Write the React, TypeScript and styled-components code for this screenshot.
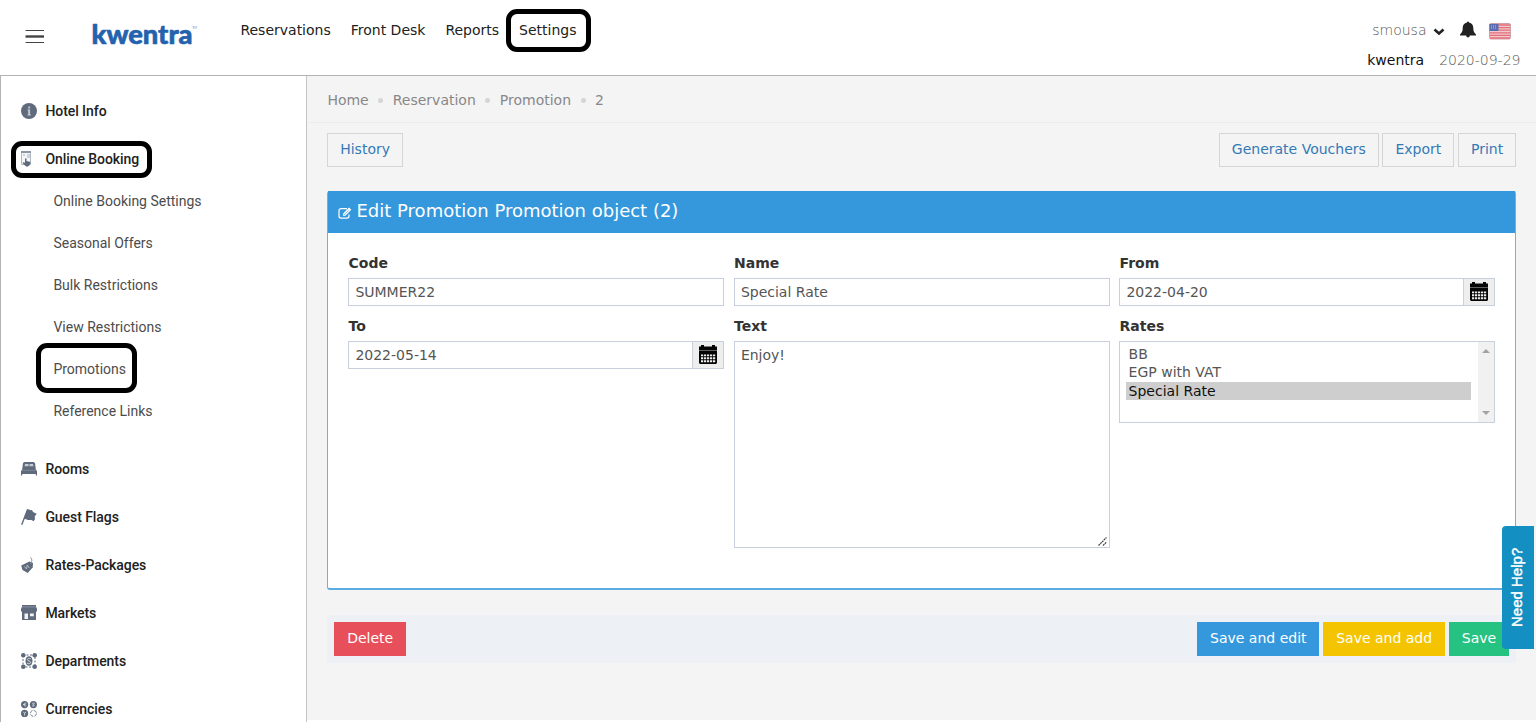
import React from 'react';
import styled, { createGlobalStyle } from 'styled-components';

const GlobalStyle = createGlobalStyle`
  *, *::before, *::after { box-sizing: border-box; }
  body { margin: 0; background: #fff; overflow: hidden; }
`;

const Page = styled.div`
  position: relative;
  display: flex;
  flex-direction: column;
  width: 1536px;
  height: 722px;
  overflow: hidden;
  background: #fff;
  font-family: 'DejaVu Sans', sans-serif;
  font-size: 14px;
  color: #333;
`;

/* ---------- top bar ---------- */
const Header = styled.header`
  display: flex;
  flex: none;
  height: 76px;
  border-bottom: 1px solid #b4b4b4;
`;
const MenuButton = styled.div`
  width: 91px;
  padding: 29px 0 0 25px;
  svg { display: block; }
`;
const Brand = styled.div`
  width: 149.4px;
  padding-top: 17px;
  svg { display: block; }
`;
const Nav = styled.nav`
  display: flex;
  gap: 20px;
  flex: 1;
  height: 60px;
  align-items: center;
`;
const NavLink = styled.a`
  color: #212121;
  font-size: 14px;
  line-height: 20px;
  white-space: nowrap;
`;
const Account = styled.div`
  width: 170px;
  padding: 20px 15.5px 0 0;
  display: flex;
  flex-direction: column;
  align-items: flex-end;
`;
const AccountRow = styled.div`
  display: flex;
  align-items: center;
  height: 20px;
  margin-right: 10px;
  svg { display: block; }
`;
const Thin = styled.span`
  font-weight: 200;
  color: #555;
`;
const Chevron = styled.span` margin: 3px 14.5px 0 6.5px; `;
const Bell = styled.span` margin: -2px 13px 0 0; `;
const Flag = styled.span` margin-top: 3px; `;
const PropertyRow = styled.div`
  display: flex;
  gap: 15px;
  margin-top: 10px;
  line-height: 20px;
  color: #111;
`;

/* ---------- sidebar ---------- */
const Body = styled.div`
  display: flex;
  flex: 1;
  min-height: 0;
`;
const Sidebar = styled.aside`
  width: 307px;
  flex: none;
  overflow: hidden;
  padding-top: 11px;
  border-left: 1px solid #b4b4b4;
  border-right: 1px solid #c4c4c4;
  font-family: Roboto, sans-serif;
  background: #fff;
`;
const MenuItem = styled.div`
  display: flex;
  align-items: center;
  height: 48px;
  padding-left: 20px;
  color: #212121;
  font-size: 14px;
  font-weight: 500;
  letter-spacing: -0.06px;
`;
const MenuIcon = styled.span`
  width: 24.4px;
  height: 16px;
  svg { display: block; }
`;
const SubMenu = styled.div`
  display: flex;
  flex-direction: column;
  margin: -3px 0 13px;
`;
const SubItem = styled.div`
  height: 42px;
  line-height: 42px;
  padding-left: 52.4px;
  font-size: 14px;
  color: #4c4c4c;
`;

/* ---------- main ---------- */
const Main = styled.main`
  flex: 1;
  min-width: 0;
  height: 644px;
  background: #f4f4f4;
`;
const Crumbs = styled.div`
  display: flex;
  align-items: center;
  height: 47px;
  padding: 2px 0 0 20.4px;
  border-bottom: 1px solid #ececec;
  color: #888;
`;
const CrumbDot = styled.i`
  width: 5px;
  height: 5px;
  margin: 0 9.5px;
  border-radius: 50%;
  background: #d5d5d5;
`;
const Toolbar = styled.div`
  display: flex;
  justify-content: space-between;
  padding: 10px 20px 0;
`;
const ButtonGroup = styled.div`
  display: flex;
  gap: 3.7px;
`;
const Button = styled.div<{ $bg?: string }>`
  height: 34px;
  padding: 0 11.8px 0 12.2px;
  border: 1px solid ${p => p.$bg ?? '#d5d5d5'};
  background: ${p => p.$bg ?? 'transparent'};
  color: ${p => (p.$bg ? '#fff' : '#337ab7')};
  line-height: 30px;
  white-space: nowrap;
`;
const Panel = styled.section`
  margin: 24px 20px 0;
  height: 399px;
  border: 1px solid #6cb0e4;
  border-bottom: 2px solid #5dabe3;
  border-radius: 3px;
  background: #fff;
`;
const PanelTitle = styled.div`
  display: flex;
  align-items: center;
  height: 42px;
  margin: -1px 0 0;
  padding: 0 0 3px 10px;
  background: #3598dc;
  color: #fff;
  font-size: 18px;
  gap: 4.5px;
  svg { display: block; margin-top: 5px; }
`;
const Form = styled.div`
  display: grid;
  grid-template-columns: repeat(3, 1fr);
  column-gap: 9.5px;
  row-gap: 10px;
  align-items: start;
  padding: 20px;
`;
const Field = styled.div`
  display: flex;
  flex-direction: column;
`;
const Label = styled.label`
  font-weight: 700;
  line-height: 20px;
  margin-bottom: 5px;
  padding-left: 0.5px;
`;
const Control = styled.div<{ $h?: number }>`
  position: relative;
  display: flex;
  height: ${p => p.$h ?? 28}px;
  border: 1px solid #c8cfdd;
  background: #fff;
  color: #555;
`;
const Value = styled.div`
  flex: 1;
  padding-left: 6.4px;
  line-height: 27px;
`;
const Addon = styled.div`
  width: 31px;
  padding-bottom: 1px;
  border-left: 1px solid #ccd0d8;
  background: #eee;
  display: flex;
  align-items: center;
  justify-content: center;
`;
const Grip = styled.span`
  position: absolute;
  right: 2px;
  bottom: 1px;
  svg { display: block; }
`;
const Options = styled.div`
  flex: 1;
  padding: 3px 7px 0 6px;
`;
const Option = styled.div<{ $on?: boolean }>`
  height: 18.4px;
  line-height: 19px;
  padding-left: 2.6px;
  background: ${p => (p.$on ? '#cecece' : 'transparent')};
  color: ${p => (p.$on ? '#101010' : '#555')};
`;
const Scroll = styled.div`
  width: 16px;
  background: #f1f1f1;
  display: flex;
  flex-direction: column;
  align-items: center;
  justify-content: space-between;
  padding: 7px 0 7px;
`;
const Actions = styled.div`
  display: flex;
  justify-content: space-between;
  height: 48px;
  margin: 25px 20px 0;
  padding: 7px;
  background: #edf1f6;
`;

/* ---------- overlays ---------- */
const Highlight = styled.div<{ $x: number; $y: number; $w: number; $h: number }>`
  position: absolute;
  left: ${p => p.$x}px;
  top: ${p => p.$y}px;
  width: ${p => p.$w}px;
  height: ${p => p.$h}px;
  border: 5px solid #000;
  border-radius: 11px;
`;
const HelpTab = styled.div`
  position: absolute;
  left: 1502px;
  top: 526px;
  width: 32px;
  height: 123px;
  padding-left: 4px;
  display: flex;
  align-items: center;
  justify-content: center;
  background: #138fc2;
  color: #fff;
  font: 400 15px 'Liberation Sans', Arial, sans-serif;
  -webkit-text-stroke: 0.45px #fff;
  writing-mode: vertical-rl;
  transform: rotate(180deg);
  border-radius: 0 4px 4px 0;
`;

const slate = '#5f6b7c';
const icons: Record<string, React.ReactNode> = {
  info: (
    <>
      <circle cx="8" cy="8" r="8" fill={slate} />
      <path d="M7.2 3.5h1.9v2H7.2zM6.4 6.6h2.7v5h.8v1H6.3v-1h.9v-4h-.8z" fill="#c4cad2" />
    </>
  ),
  booking: (
    <>
      <path d="M.5.5h9v13h-9z" fill="#f4f5f7" stroke="#b3bac3" />
      <path d="M0 0h10v2H0z" fill="#8d97a4" />
      <path d="M2 4h2M6 4h3M6 6h3" stroke="#aab1bb" />
      <path d="M4 8c0-1 1.500-1 1.500 0v2l3.200.8c.8.2 1 .7.8 1.500L8.300 14.500C7 16 5 16 4 14.500L1.500 12c.2-1.200 1.500-1 2.500-.3z" fill={slate} />
    </>
  ),
  bed: (
    <>
      <path d="M3.500 1h9l1.500 1 .8 6.500L16 10v4.500h-1.200V13H1.200v1.500H0V10l1.200-1.500L2 2z" fill={slate} />
      <path d="M4 3h3.500v2.300H3.600zM8.500 3H12l.4 2.300H8.500z" fill="#c6ccd4" />
      <path d="M1 9.400h14" stroke="#8b95a2" strokeWidth=".6" />
    </>
  ),
  flag: (
    <>
      <path d="M6.600.4.700 15.800" stroke={slate} strokeWidth="1.400" />
      <path d="M6.500 0 10 1.300l1-.2 1 2 3.700 1.700-2 2.700.3 2.700-1.500 2-2-1.200L7 11 3 9.500z" fill={slate} />
    </>
  ),
  tag: (
    <>
      <path d="M.200 8.500 8.500 4.500 12 6l-.3 4.500-5 5.500L1.500 13z" fill={slate} />
      <path d="M9.300 7C11 5 11.500 2.500 9.500.400" stroke="#87919e" fill="none" />
      <path d="m3.500 9.500 2 2.500.8-4 2 3" stroke="#b9c0c9" fill="none" strokeWidth=".9" />
    </>
  ),
  store: (
    <>
      <path d="M1 0h14v1.500L16 4v2.500h-1V15H1V6.500H0V4l1-2.500z" fill={slate} />
      <path d="M1 1.900h14" stroke="#9fa8b4" strokeWidth=".6" />
      <path d="M3.500 8.500H7V14H3.500zM9 8.500h3.800v2.800H9z" fill="#f0f2f4" />
    </>
  ),
  dept: (
    <>
      <path d="M2 2h12v12H2z" fill="none" stroke={slate} strokeDasharray="2 1.500" />
      <circle cx="2.300" cy="2.300" r="2.300" fill={slate} />
      <circle cx="13.700" cy="2.300" r="2.300" fill={slate} />
      <circle cx="2.300" cy="13.700" r="2.300" fill={slate} />
      <circle cx="13.700" cy="13.700" r="2.300" fill={slate} />
      <ellipse cx="8" cy="8" rx="3.500" ry="4.800" fill={slate} />
      <path d="M9.800 6C8.500 4.800 6.300 5.300 6.500 6.800S9.700 8 9.600 9.500s-2.300 1.700-3.500.5" stroke="#e4e7eb" fill="none" strokeWidth=".9" />
    </>
  ),
  coins: (
    <>
      <circle cx="3.600" cy="3.600" r="3.600" fill={slate} />
      <circle cx="12.400" cy="3.600" r="3.600" fill={slate} />
      <circle cx="3.600" cy="12.400" r="3.600" fill={slate} />
      <circle cx="12.400" cy="12.400" r="3" fill="none" stroke="#7d8896" strokeDasharray="3.500 1.200" />
      <path d="M5.200 2.300c-3-1-3 3.500 0 2.500M2 3.500h2.500M13.800 2.300c-3-1-2.500 1.300-1.300 1.300 1.500.4 1 2-1.400 1.200M2.300 10.800l1.300 1.600 1.300-1.600M3.600 12.300v2.200" stroke="#e4e7eb" fill="none" strokeWidth=".8" />
    </>
  ),
};
const Glyph = ({ name }: { name: string }) => (
  <MenuIcon><svg width="16" height="16" viewBox="0 0 16 16">{icons[name]}</svg></MenuIcon>
);

const CalendarIcon = () => (
  <svg width="18" height="19" viewBox="0 0 18 19">
    <path d="M2 0h3v1.500h8V0h3v1.500h2V18l-1 1H1l-1-1V1.500h2z" fill="#050505" />
    <path d="M0 5.500h18" stroke="#8a8a8a" strokeWidth=".7" />
    <path d="M2 9.500h2.200v1.700H2zM5 9.500h2.200v1.700H5zM8 9.500h2.200v1.700H8zM11 9.500h2.200v1.700H11zM14 9.500h2.200v1.700H14zM2 12.200h2.200v2H2zM5 12.200h2.200v2H5zM8 12.200h2.200v2H8zM11 12.200h2.200v2H11zM14 12.200h2.200v2H14zM2 15.200h2.200v2H2zM5 15.200h2.200v2H5zM8 15.200h2.200v2H8zM11 15.200h2.200v2H11zM14 15.200h2.200v2H14z" fill="#eee" />
  </svg>
);

const FlagIcon = () => (
  <svg width="22" height="17" viewBox="0 0 22 17">
    <rect x=".5" y=".5" width="21" height="15.500" rx="1.500" fill="#f3c9cd" stroke="#cfa1a6" />
    <path d="M1 2h20M1 4.600h20M1 7.200h20M1 9.800h20M1 12.400h20M1 15h20" stroke="#e26e78" strokeWidth="1.300" />
    <path d="M.5 1h9v7h-9z" fill="#5b6db0" />
    <path d="M2 3h6M2 5h6" stroke="#b7c0df" strokeDasharray="1 1" />
  </svg>
);

const DateField = ({ label, value }: { label: string; value: string }) => (
  <Field>
    <Label>{label}</Label>
    <Control><Value>{value}</Value><Addon><CalendarIcon /></Addon></Control>
  </Field>
);

const topItems = [['info', 'Hotel Info'], ['booking', 'Online Booking']];
const subItems = ['Online Booking Settings', 'Seasonal Offers', 'Bulk Restrictions', 'View Restrictions', 'Promotions', 'Reference Links'];
const moreItems = [['bed', 'Rooms'], ['flag', 'Guest Flags'], ['tag', 'Rates-Packages'], ['store', 'Markets'], ['dept', 'Departments'], ['coins', 'Currencies']];
const crumbs = ['Home', 'Reservation', 'Promotion', '2'];

export default function App() {
  return (
    <Page>
      <GlobalStyle />
      <Header>
        <MenuButton>
          <svg width="20" height="15" viewBox="0 0 20 15">
            <path d="M.5 1.500h18.500M.5 13.500h18.500" stroke="#444" strokeWidth="1.200" />
            <path d="M.5 7.500h18.500" stroke="#444" strokeWidth="2.400" />
          </svg>
        </MenuButton>
        <Brand>
          <svg width="112" height="34" viewBox="0 0 112 34">
            <text x="0.500" y="26.800" textLength="101" lengthAdjust="spacingAndGlyphs" fontFamily="Lato, sans-serif" fontWeight="900" fontSize="26.500" fill="#2462ae" stroke="#2462ae" strokeWidth=".6" strokeLinejoin="round">kwentra</text>
            <text x="101" y="12" textLength="5" fontFamily="Lato, sans-serif" fontSize="4" fill="#7c9fce">TM</text>
          </svg>
        </Brand>
        <Nav>
          {['Reservations', 'Front Desk', 'Reports', 'Settings'].map(t => <NavLink key={t}>{t}</NavLink>)}
        </Nav>
        <Account>
          <AccountRow>
            <Thin>smousa</Thin>
            <Chevron>
              <svg width="12" height="8" viewBox="0 0 12 8"><path d="m1.500 1.500 4.500 4 4.500-4" fill="none" stroke="#222" strokeWidth="2.500" /></svg>
            </Chevron>
            <Bell>
              <svg width="16" height="17" viewBox="0 0 16 17">
                <path d="M7 1.500a1 1 0 0 1 2 0c3 .6 4.300 2.700 4.300 5.500 0 3 .7 4.500 2.700 6.500v1H0v-1C2 11.500 2.700 10 2.700 7 2.700 4.200 4 2.100 7 1.500zM6 14h4c-.2 3.300-3.800 3.300-4 0z" fill="#222" />
              </svg>
            </Bell>
            <Flag><FlagIcon /></Flag>
          </AccountRow>
          <PropertyRow><span>kwentra</span><Thin>2020-09-29</Thin></PropertyRow>
        </Account>
      </Header>
      <Body>
        <Sidebar>
          {topItems.map(([i, t]) => <MenuItem key={t}><Glyph name={i} />{t}</MenuItem>)}
          <SubMenu>{subItems.map(t => <SubItem key={t}>{t}</SubItem>)}</SubMenu>
          {moreItems.map(([i, t]) => <MenuItem key={t}><Glyph name={i} />{t}</MenuItem>)}
        </Sidebar>
        <Main>
          <Crumbs>
            {crumbs.map((t, i) => (
              <React.Fragment key={t}>{i > 0 && <CrumbDot />}<span>{t}</span></React.Fragment>
            ))}
          </Crumbs>
          <Toolbar>
            <Button>History</Button>
            <ButtonGroup>
              <Button>Generate Vouchers</Button><Button>Export</Button><Button>Print</Button>
            </ButtonGroup>
          </Toolbar>
          <Panel>
            <PanelTitle>
              <svg width="14" height="12" viewBox="0 0 14 12">
                <path d="M9 1.600H3A2 2 0 0 0 1 3.600v5.500a2 2 0 0 0 2 2h6a2 2 0 0 0 2-2V7.500" fill="none" stroke="#fff" strokeWidth="1.200" />
                <path d="m5 8.800.2-2.400L11 .6l2.300 2.200-5.900 5.900z" fill="#fff" />
                <path d="m6.200 7.700 4.400-4.400" stroke="#3598dc" strokeWidth=".7" />
              </svg>
              Edit Promotion Promotion object (2)
            </PanelTitle>
            <Form>
              <Field><Label>Code</Label><Control><Value>SUMMER22</Value></Control></Field>
              <Field><Label>Name</Label><Control><Value>Special Rate</Value></Control></Field>
              <DateField label="From" value="2022-04-20" />
              <DateField label="To" value="2022-05-14" />
              <Field>
                <Label>Text</Label>
                <Control $h={207}>
                  <Value>Enjoy!</Value>
                  <Grip><svg width="9" height="9" viewBox="0 0 9 9"><path d="M.5 8.500l8-8M5 8.500 8.500 5" stroke="#444" strokeWidth="1.200" strokeDasharray="2 .5" /></svg></Grip>
                </Control>
              </Field>
              <Field>
                <Label>Rates</Label>
                <Control $h={82}>
                  <Options><Option>BB</Option><Option>EGP with VAT</Option><Option $on>Special Rate</Option></Options>
                  <Scroll>
                    <svg width="8" height="4" viewBox="0 0 8 4"><path d="m0 4 4-4 4 4z" fill="#a3a3a3" /></svg>
                    <svg width="8" height="4" viewBox="0 0 8 4"><path d="m0 0 4 4 4-4z" fill="#a3a3a3" /></svg>
                  </Scroll>
                </Control>
              </Field>
            </Form>
          </Panel>
          <Actions>
            <Button $bg="#e7505a">Delete</Button>
            <ButtonGroup>
              <Button $bg="#3598dc">Save and edit</Button>
              <Button $bg="#f4c400">Save and add</Button>
              <Button $bg="#26c281">Save</Button>
            </ButtonGroup>
          </Actions>
        </Main>
      </Body>
      <Highlight $x={506} $y={9} $w={85} $h={43} />
      <Highlight $x={11} $y={141} $w={141} $h={37} />
      <Highlight $x={36} $y={343} $w={101} $h={50} />
      <HelpTab>Need Help?</HelpTab>
    </Page>
  );
}
